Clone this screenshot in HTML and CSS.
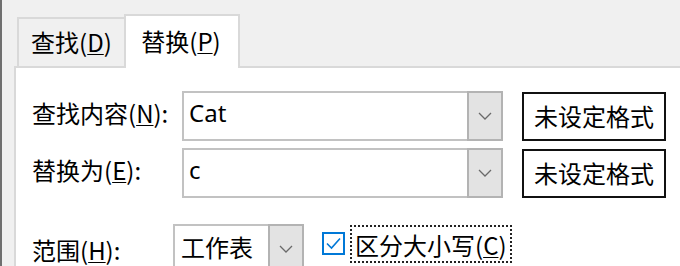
FILE: index.html
```html
<!DOCTYPE html>
<html lang="zh-CN">
<head>
    <meta charset="UTF-8">
    <title>查找和替换</title>
    <link rel="stylesheet" href="styles.css">
</head>
<body>
    <div class="window">
        <div class="tabs">
            <div class="tab">查找(<u>D</u>)</div>
            <div class="tab active">替换(<u>P</u>)</div>
        </div>
        <div class="panel">
            <div class="rows">
                <div class="label">查找内容(<u>N</u>):</div>
                <div class="combo">
                    <span class="value">Cat</span>
                    <span class="drop"><svg width="14" height="8" viewBox="0 0 14 8"><path d="M1 1 L7 7 L13 1" fill="none" stroke="#6a6a6a" stroke-width="1.3"/></svg></span>
                </div>
                <div class="fmt">未设定格式</div>

                <div class="label">替换为(<u>E</u>):</div>
                <div class="combo">
                    <span class="value">c</span>
                    <span class="drop"><svg width="14" height="8" viewBox="0 0 14 8"><path d="M1 1 L7 7 L13 1" fill="none" stroke="#6a6a6a" stroke-width="1.3"/></svg></span>
                </div>
                <div class="fmt">未设定格式</div>
            </div>

            <div class="options">
                <div class="label scope">范围(<u>H</u>):</div>
                <div class="combo small">
                    <span class="value cjk">工作表</span>
                    <span class="drop"><svg width="14" height="8" viewBox="0 0 14 8"><path d="M1 1 L7 7 L13 1" fill="none" stroke="#6a6a6a" stroke-width="1.3"/></svg></span>
                </div>
                <div class="check">
                    <span class="box"><svg width="19" height="19" viewBox="0 0 19 19"><path d="M3 9.5 L7.5 14 L16 4.5" fill="none" stroke="#0078d7" stroke-width="1.6"/></svg></span>
                    <span class="focus">区分大小写(<u>C</u>)</span>
                </div>
            </div>
        </div>
    </div>
</body>
</html>
```

FILE: styles.css
```css
body {
    margin: 0;
    padding: 0;
    background: #f0f0f0;
    font-family: "Noto Sans CJK SC", "Noto Sans", sans-serif;
    font-size: 24px;
    color: #000;
    overflow: hidden;
}

u {
    text-decoration-thickness: 1px;
    text-underline-offset: 2px;
}

.window {
    height: 266px;
    border-left: 2px solid #6f6f6f;
    padding-left: 12px;
    box-sizing: border-box;
    overflow: hidden;
}

.tabs {
    display: flex;
    align-items: flex-end;
    padding-left: 3px;
    padding-top: 14px;
    height: 52px;
    box-sizing: content-box;
}

.tab {
    width: 107px;
    height: 49px;
    box-sizing: border-box;
    border: 2px solid #d9d9d9;
    border-bottom: none;
    border-right: none;
    display: flex;
    align-items: center;
    justify-content: center;
    line-height: 1;
    padding-bottom: 2px;
}

.tab.active {
    width: 116px;
    height: 54px;
    margin-bottom: -2px;
    background: #fff;
    border-right: 2px solid #d9d9d9;
    position: relative;
    z-index: 1;
    padding-bottom: 2px;
    padding-right: 2px;
}

.panel {
    background: #fff;
    border-top: 2px solid #d9d9d9;
    border-left: 2px solid #d9d9d9;
    padding: 23px 0 0 16px;
    height: 300px;
}

.rows {
    display: grid;
    grid-template-columns: 150px 321px 163px;
    row-gap: 7px;
    align-items: center;
}

.label {
    line-height: 1;
    padding-bottom: 6px;
    white-space: nowrap;
}

.combo {
    display: flex;
    height: 50px;
    box-sizing: border-box;
    border: 2px solid #c2c2c2;
    background: #fff;
}

.combo .value {
    flex: 1;
    display: flex;
    align-items: center;
    padding: 0 0 8px 5px;
    font-family: "Noto Sans", sans-serif;
    font-size: 24px;
}

.combo .value.cjk {
    font-family: "Noto Sans CJK SC", sans-serif;
    padding: 0 0 6px 6px;
}

.drop {
    width: 32px;
    margin: -2px -2px -2px 0;
    background: #e3e3e3;
    border: 2px solid #b3b3b3;
    display: flex;
    align-items: center;
    justify-content: center;
}

.fmt {
    height: 49px;
    margin-left: 19px;
    box-sizing: border-box;
    border: 2px solid #111;
    display: flex;
    align-items: center;
    justify-content: center;
    line-height: 1;
}

.options {
    display: flex;
    align-items: flex-start;
    margin-top: 26px;
}

.scope {
    width: 141px;
    margin-top: 14px;
    padding-bottom: 0;
}

.combo.small {
    width: 131px;
}

.check {
    display: flex;
    align-items: flex-start;
    margin-left: 18px;
    margin-top: 1px;
}

.box {
    width: 23px;
    height: 23px;
    box-sizing: border-box;
    border: 2px solid #0078d7;
    margin-top: 7px;
    display: flex;
    align-items: center;
    justify-content: center;
}

.focus {
    margin-left: 5px;
    height: 38px;
    padding: 1px 3px 0;
    box-sizing: border-box;
    border: 2px dotted #222;
    display: flex;
    align-items: center;
    justify-content: center;
    line-height: 1;
    white-space: nowrap;
}
```
